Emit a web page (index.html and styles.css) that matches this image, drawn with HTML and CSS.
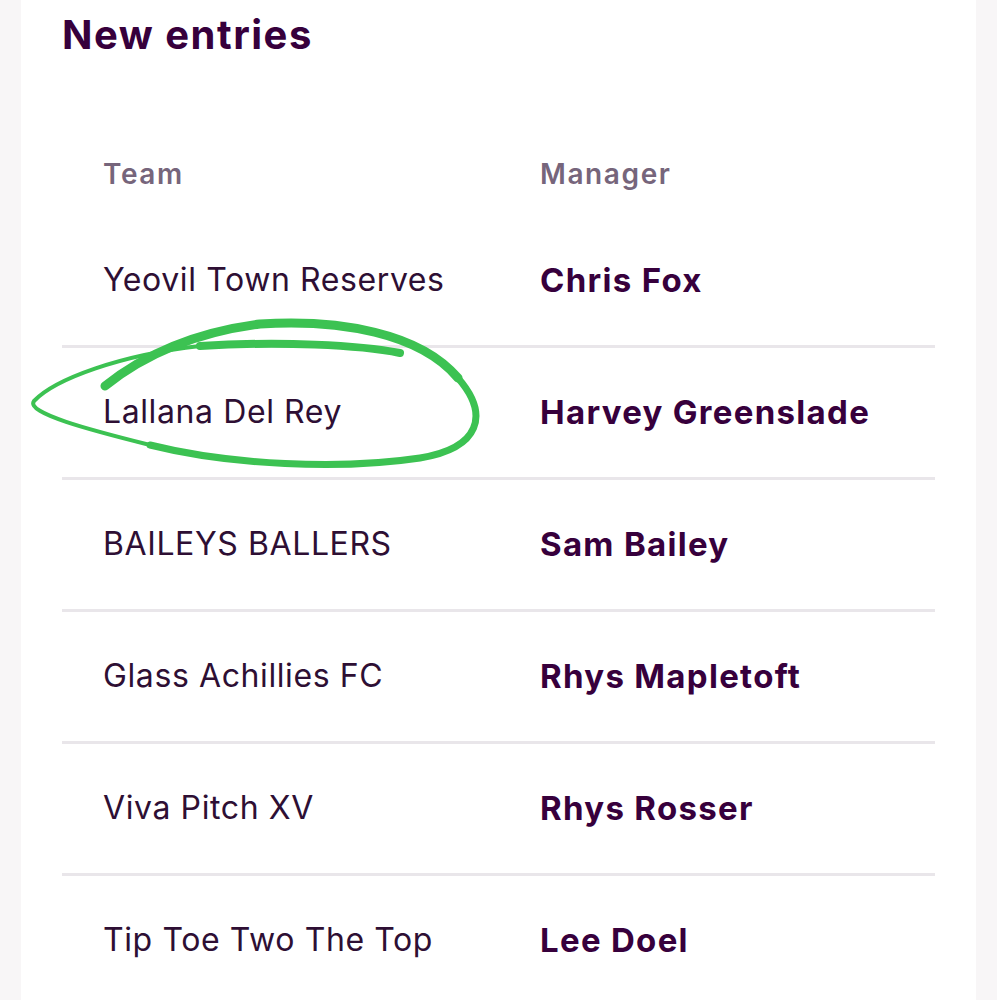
FILE: index.html
```html
<!DOCTYPE html>
<html lang="en">
<head>
<meta charset="utf-8">
<title>New entries</title>
<link rel="stylesheet" href="styles.css">
</head>
<body>
<main class="card">
  <h1 class="title">New entries</h1>
  <div class="table">
    <div class="row head">
      <div class="cell">Team</div>
      <div class="cell">Manager</div>
    </div>
    <div class="row first">
      <div class="cell team">Yeovil Town Reserves</div>
      <div class="cell mgr">Chris Fox</div>
    </div>
    <div class="row marked">
      <div class="cell team">Lallana Del Rey</div>
      <div class="cell mgr">Harvey Greenslade</div>
      <svg class="scribble" width="470" height="170" viewBox="20 310 470 170" aria-hidden="true">
        <path d="M105,383 C140,355 190,330 260,321 C340,316 420,330 458,375" stroke-width="9"/>
        <path d="M458,375 C490,412 480,445 420,455 C340,467 230,462 150,442" stroke-width="7"/>
        <path d="M150,442 C90,427 25,410 34,398 C55,376 120,352 200,343" stroke-width="4"/>
        <path d="M200,343 C280,338 360,342 400,350" stroke-width="8"/>
      </svg>
    </div>
    <div class="row">
      <div class="cell team">BAILEYS BALLERS</div>
      <div class="cell mgr">Sam Bailey</div>
    </div>
    <div class="row">
      <div class="cell team">Glass Achillies FC</div>
      <div class="cell mgr">Rhys Mapletoft</div>
    </div>
    <div class="row">
      <div class="cell team">Viva Pitch XV</div>
      <div class="cell mgr">Rhys Rosser</div>
    </div>
    <div class="row">
      <div class="cell team">Tip Toe Two The Top</div>
      <div class="cell mgr">Lee Doel</div>
    </div>
  </div>
</main>
</body>
</html>
```

FILE: styles.css
```css
html, body {
  margin: 0;
  padding: 0;
  background: #f8f6f7;
}

body {
  font-family: Inter, Lato, "Noto Sans", sans-serif;
  color: #2e0f34;
}

.card {
  margin: 0 21px;
  min-height: 1000px;
  background: #ffffff;
  padding: 0 41px;
  overflow: hidden;
}

.title {
  margin: 0;
  padding-top: 11px;
  font-size: 40px;
  line-height: 48px;
  font-weight: 700;
  letter-spacing: 1.5px;
  color: #37003c;
}

.table {
  display: flex;
  flex-direction: column;
}

.row {
  display: grid;
  grid-template-columns: 437px 1fr;
  border-top: 3px solid #e9e6ea;
  padding: 44px 0 45px 41px;
  font-size: 32px;
  line-height: 40px;
  position: relative;
}

.row.head {
  border-top: 0;
  padding-top: 99px;
  padding-bottom: 22px;
  font-size: 28px;
  line-height: 33px;
  font-weight: 600;
  letter-spacing: 1.6px;
  color: #76657b;
}

.row.first {
  border-top-color: transparent;
}

.team {
  font-weight: 400;
  letter-spacing: 0.6px;
  color: #2e0f34;
}

.mgr {
  font-size: 33px;
  font-weight: 700;
  letter-spacing: 1.3px;
  color: #37003c;
}

.scribble {
  position: absolute;
  left: -42px;
  top: -35px;
  fill: none;
  stroke: #3cc252;
  stroke-linecap: round;
  stroke-linejoin: round;
  pointer-events: none;
}
```
